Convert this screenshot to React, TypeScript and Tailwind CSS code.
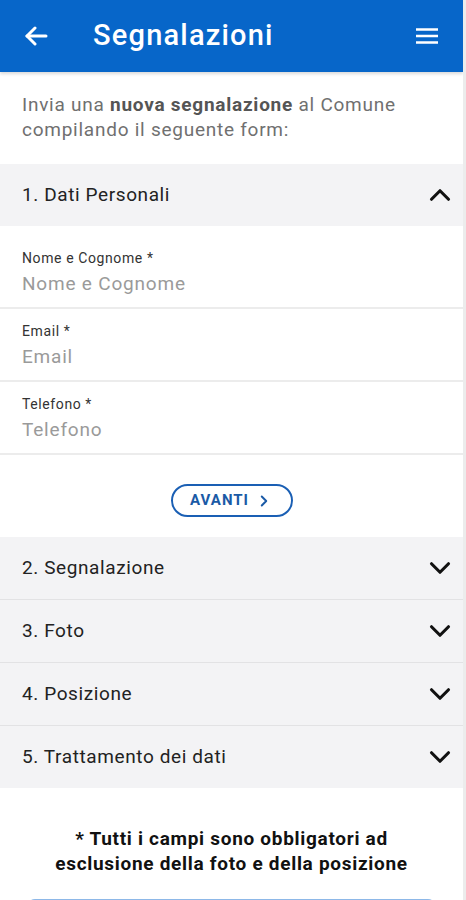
import { ChevronDown, ChevronUp, ChevronRight } from "lucide-react";

const sections = [
  "2. Segnalazione",
  "3. Foto",
  "4. Posizione",
  "5. Trattamento dei dati",
];

const fields = [
  { label: "Nome e Cognome *", placeholder: "Nome e Cognome" },
  { label: "Email *", placeholder: "Email" },
  { label: "Telefono *", placeholder: "Telefono" },
];

const App = () => {
  return (
    <div className="h-[900px] w-[466px] overflow-hidden border-r-[3px] border-[#ececec] bg-white font-['Roboto',_'Noto_Sans',_sans-serif]">
      {/* Header */}
      <div className="flex h-[72px] items-center bg-[#0766c9] px-[24px] shadow-[0_2px_3px_rgba(0,0,0,0.15)]">
        <svg width="24" height="20" viewBox="0 0 24 20" fill="none" stroke="white" strokeWidth="3" strokeLinecap="round" strokeLinejoin="round">
          <path d="M22 10H3" />
          <path d="M11 2 3 10l8 8" />
        </svg>
        <h1 className="ml-[45px] flex-1 text-[29px] font-medium tracking-[1.2px] text-white">
          Segnalazioni
        </h1>
        <svg width="24" height="18" viewBox="0 0 24 18" fill="none" stroke="white" strokeWidth="2.6">
          <path d="M1 2.5h22M1 9h22M1 15.5h22" />
        </svg>
      </div>

      {/* Intro */}
      <p className="px-[22px] pt-[20px] pb-[22px] text-[19px] leading-[25px] tracking-[0.75px] text-[#707070]">
        Invia una <span className="font-bold text-[#555]">nuova segnalazione</span> al Comune
        compilando il seguente form:
      </p>

      {/* Section 1 */}
      <div className="flex h-[62px] items-center justify-between bg-[#f3f3f5] pl-[22px] pr-[6px]">
        <span className="text-[19px] tracking-[0.6px] text-[#222]">1. Dati Personali</span>
        <ChevronUp size={34} strokeWidth={2.2} className="text-[#111]" />
      </div>

      <div className="pt-[10px]">
        {fields.map((f) => (
          <div key={f.label} className="border-b-2 border-[#ececec] px-[22px] pt-[14px] pb-[11px]">
            <div className="text-[14px] leading-[16px] tracking-[0.6px] text-[#333]">{f.label}</div>
            <div className="mt-[6px] text-[19px] leading-[24px] tracking-[0.8px] text-[#9a9a9a]">{f.placeholder}</div>
          </div>
        ))}
      </div>

      <div className="flex justify-center pt-[29px] pb-[20px]">
        <button className="flex h-[33px] w-[122px] items-center justify-center gap-[6px] rounded-full border-2 border-[#1a5fb4] text-[15px] font-bold tracking-[1px] text-[#1a5aa6]">
          AVANTI
          <ChevronRight size={18} strokeWidth={2.6} />
        </button>
      </div>

      {/* Other sections */}
      {sections.map((s, i) => (
        <div
          key={s}
          className={
            i < sections.length - 1
              ? "flex h-[63px] items-center justify-between border-b border-[#e2e2e4] bg-[#f3f3f5] pl-[22px] pr-[6px]"
              : "flex h-[62px] items-center justify-between bg-[#f3f3f5] pl-[22px] pr-[6px]"
          }
        >
          <span className="text-[19px] tracking-[0.6px] text-[#222]">{s}</span>
          <ChevronDown size={34} strokeWidth={2.2} className="text-[#111]" />
        </div>
      ))}

      {/* Footer */}
      <p className="px-[10px] pt-[38px] text-center text-[19px] font-bold leading-[25px] tracking-[0.7px] text-[#111]">
        * Tutti i campi sono obbligatori ad
        <br />
        esclusione della foto e della posizione
      </p>

      <div className="px-[27px] pt-[23px]">
        <div className="h-[50px] rounded-lg bg-[#8db8e8]" />
      </div>
    </div>
  );
};

export default App;
